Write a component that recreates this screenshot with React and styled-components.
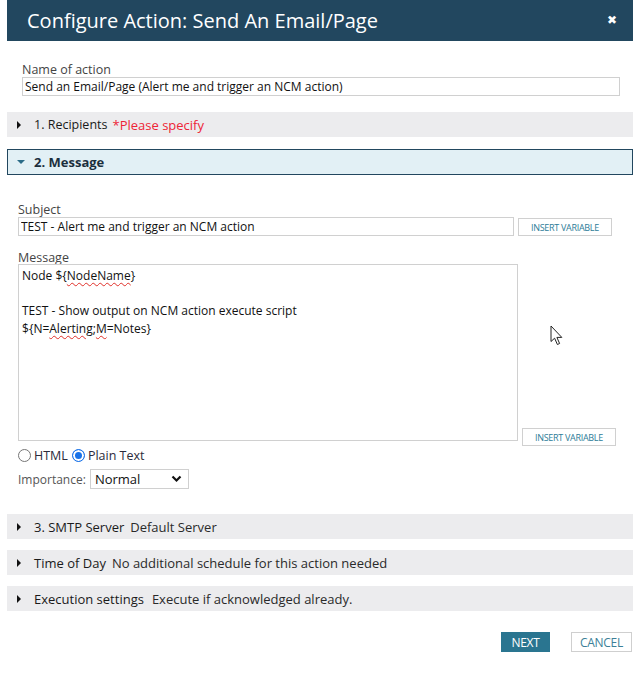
import styled, { createGlobalStyle } from "styled-components";

const GlobalStyle = createGlobalStyle`
  body {
    margin: 0;
    background: #ffffff;
    font-family: "Open Sans", "Liberation Sans", sans-serif;
    color: #222;
  }
`;

const sections = [
  { title: "3. SMTP Server", note: "Default Server", gap: 6 },
  { title: "Time of Day", note: "No additional schedule for this action needed", gap: 6 },
  { title: "Execution settings", note: "Execute if acknowledged already.", gap: 8 },
];

const App = () => {
  return (
    <>
      <GlobalStyle />
      <Modal>
        <Header>
          <Title>Configure Action: Send An Email/Page</Title>
          <Close>✖</Close>
        </Header>

        <NameBlock>
          <Label>Name of action</Label>
          <TextInput $width={598} defaultValue="Send an Email/Page (Alert me and trigger an NCM action)" />
        </NameBlock>

        <Section $first>
          <ArrowRight />
          <SectionTitle $tight>1. Recipients</SectionTitle>
          <Warning>*Please specify</Warning>
        </Section>

        <Section $open>
          <ArrowDown />
          <SectionTitle $bold>2. Message</SectionTitle>
        </Section>

        <MessagePanel>
          <Label>Subject</Label>
          <FieldRow>
            <TextInput $width={496} defaultValue="TEST - Alert me and trigger an NCM action" />
            <VarButton>INSERT VARIABLE</VarButton>
          </FieldRow>

          <Label $top={14} $bottom={-1}>Message</Label>
          <FieldRow $end>
            <MessageBox>
              <Line>
                Node ${"{"}
                <Typo>NodeName</Typo>
                {"}"}
              </Line>
              <Line>&nbsp;</Line>
              <Line>TEST - Show output on NCM action execute script</Line>
              <Line>
                ${"{"}N=<Typo>Alerting</Typo>;<Typo>M</Typo>=Notes{"}"}
              </Line>
            </MessageBox>
            <VarButton $drop>INSERT VARIABLE</VarButton>
          </FieldRow>

          <RadioRow>
            <Radio />
            <RadioText>HTML</RadioText>
            <Radio $checked />
            <RadioText>Plain Text</RadioText>
          </RadioRow>

          <ImportanceRow>
            <ImportanceLabel>Importance:</ImportanceLabel>
            <SelectBox>
              <span>Normal</span>
              <svg width="11" height="8" viewBox="0 0 11 8">
                <path d="M1.5 1.5 L5.5 5.5 L9.5 1.5" fill="none" stroke="#111" strokeWidth="2.2" />
              </svg>
            </SelectBox>
          </ImportanceRow>

          <Pointer width="14" height="21" viewBox="0 0 14 21">
            <path
              d="M1 1 L1 16.5 L4.6 13.2 L7.4 19.5 L9.6 18.5 L6.9 12.4 L11.8 12.4 Z"
              fill="#fff"
              stroke="#222"
              strokeWidth="1"
              strokeLinejoin="round"
            />
          </Pointer>
        </MessagePanel>

        <Collapsed>
          {sections.map((s) => (
            <Section key={s.title}>
              <ArrowRight />
              <SectionTitle>{s.title}</SectionTitle>
              <Note $gap={s.gap}>{s.note}</Note>
            </Section>
          ))}
        </Collapsed>

        <Footer>
          <Button $primary>NEXT</Button>
          <Button>CANCEL</Button>
        </Footer>
      </Modal>
    </>
  );
};

const Modal = styled.div`
  width: 626px;
  margin-left: 7px;
  display: flex;
  flex-direction: column;
`;

const Header = styled.div`
  height: 41px;
  background: #22475f;
  display: flex;
  align-items: center;
  justify-content: space-between;
  padding: 0 16px 0 20px;
  box-sizing: border-box;
`;

const Title = styled.h1`
  margin: 0;
  color: #ffffff;
  font-size: 20px;
  font-weight: 400;
`;

const Close = styled.span`
  color: #ffffff;
  font-size: 12px;
  font-weight: 700;
  margin-top: -2px;
  font-family: "DejaVu Sans", sans-serif;
`;

const NameBlock = styled.div`
  padding: 21px 0 0 15px;
  display: flex;
  flex-direction: column;
`;

const Label = styled.label`
  font-size: 12.5px;
  line-height: 15px;
  color: #444;
  margin-top: ${(p) => p.$top || 0}px;
  margin-bottom: ${(p) => p.$bottom || 0}px;
`;

const TextInput = styled.input`
  width: ${(p) => p.$width}px;
  height: 19px;
  box-sizing: border-box;
  border: 1px solid #d0d0d0;
  padding: 0 2px;
  margin: 0;
  font-family: "Open Sans", "Liberation Sans", sans-serif;
  font-size: 12px;
  color: #111;
  outline: none;
`;

const Section = styled.div`
  box-sizing: border-box;
  display: flex;
  align-items: center;
  margin-top: ${(p) => (p.$open ? 12 : p.$first ? 16 : 17)}px;
  height: ${(p) => (p.$open ? 26 : 25)}px;
  background: ${(p) => (p.$open ? "#e2f0f5" : "#ececee")};
  border: ${(p) => (p.$open ? "1px solid #22475f" : "none")};
  padding-left: 9px;
`;

const ArrowRight = styled.span`
  width: 0;
  height: 0;
  border-top: 4px solid transparent;
  border-bottom: 4px solid transparent;
  border-left: 4px solid #111;
  margin-right: 13px;
  margin-left: 1px;
`;

const ArrowDown = styled.span`
  width: 0;
  height: 0;
  border-left: 4px solid transparent;
  border-right: 4px solid transparent;
  border-top: 4px solid #2b6c88;
  margin-right: 9px;
`;

const SectionTitle = styled.span`
  font-size: ${(p) => (p.$tight ? 12.5 : 13)}px;
  color: ${(p) => (p.$bold ? "#1b2f3d" : "#1a1a1a")};
  font-weight: ${(p) => (p.$bold ? 700 : 400)};
`;

const Warning = styled.span`
  font-size: 13px;
  color: #ee2436;
  margin-left: 5px;
`;

const Note = styled.span`
  font-size: 13px;
  color: #2a2a2a;
  margin-left: ${(p) => p.$gap}px;
`;

const MessagePanel = styled.div`
  position: relative;
  padding: 27px 0 0 11px;
  display: flex;
  flex-direction: column;
`;

const FieldRow = styled.div`
  display: flex;
  align-items: ${(p) => (p.$end ? "flex-end" : "center")};
  gap: 4px;
`;

const VarButton = styled.button`
  width: 94px;
  height: 18px;
  margin: ${(p) => (p.$drop ? "0 0 -5px 0" : "1px 0 0 0")};
  padding: 0;
  background: #ffffff;
  border: 1px solid #d0d0d0;
  color: #2d7c98;
  font-family: "Open Sans", "Liberation Sans", sans-serif;
  font-size: 9px;
  letter-spacing: -0.3px;
  cursor: pointer;
`;

const MessageBox = styled.div`
  width: 500px;
  height: 177px;
  box-sizing: border-box;
  border: 1px solid #d0d0d0;
  padding: 2px 3px;
  font-size: 12px;
  line-height: 17.5px;
  color: #111;
`;

const Line = styled.div``;

const Typo = styled.span`
  text-decoration: underline wavy #e0302a;
  text-decoration-thickness: 1px;
  text-underline-offset: 2px;
`;

const RadioRow = styled.div`
  display: flex;
  align-items: center;
  margin-top: 6px;
  height: 16px;
`;

const Radio = styled.span`
  width: 13px;
  height: 13px;
  box-sizing: border-box;
  border-radius: 50%;
  border: ${(p) => (p.$checked ? "1px solid #1a73e8" : "1px solid #767676")};
  background: ${(p) => (p.$checked ? "#1a73e8" : "#fff")};
  box-shadow: ${(p) => (p.$checked ? "inset 0 0 0 2px #fff" : "none")};
  margin-left: ${(p) => (p.$checked ? 4 : 0)}px;
`;

const RadioText = styled.span`
  font-size: 12.5px;
  color: #2b2b3b;
  margin-left: 3px;
`;

const ImportanceRow = styled.div`
  display: flex;
  align-items: center;
  margin-top: 6px;
`;

const ImportanceLabel = styled.span`
  font-size: 12px;
  color: #555;
  margin-right: 4px;
`;

const SelectBox = styled.div`
  width: 99px;
  height: 20px;
  box-sizing: border-box;
  border: 1px solid #d0d0d0;
  display: flex;
  align-items: center;
  justify-content: space-between;
  padding: 0 6px 0 4px;
  font-size: 13px;
  color: #111;
`;

const Pointer = styled.svg`
  position: absolute;
  left: 543px;
  top: 150px;
`;

const Collapsed = styled.div`
  margin-top: 8px;
  display: flex;
  flex-direction: column;
  & > div {
    margin-top: 11px;
  }
  & > div:first-child {
    margin-top: 17px;
  }
`;

const Footer = styled.div`
  display: flex;
  justify-content: flex-end;
  gap: 21px;
  margin-top: 21px;
  padding-right: 1px;
`;

const Button = styled.button`
  height: 20px;
  padding: 0;
  width: ${(p) => (p.$primary ? 49 : 61)}px;
  box-sizing: border-box;
  border: ${(p) => (p.$primary ? "none" : "1px solid #cfcfcf")};
  background: ${(p) => (p.$primary ? "#2a7590" : "#ffffff")};
  color: ${(p) => (p.$primary ? "#ffffff" : "#3c7f98")};
  font-family: "Open Sans", "Liberation Sans", sans-serif;
  font-size: 12px;
  letter-spacing: -0.3px;
  cursor: pointer;
`;

export default App;
